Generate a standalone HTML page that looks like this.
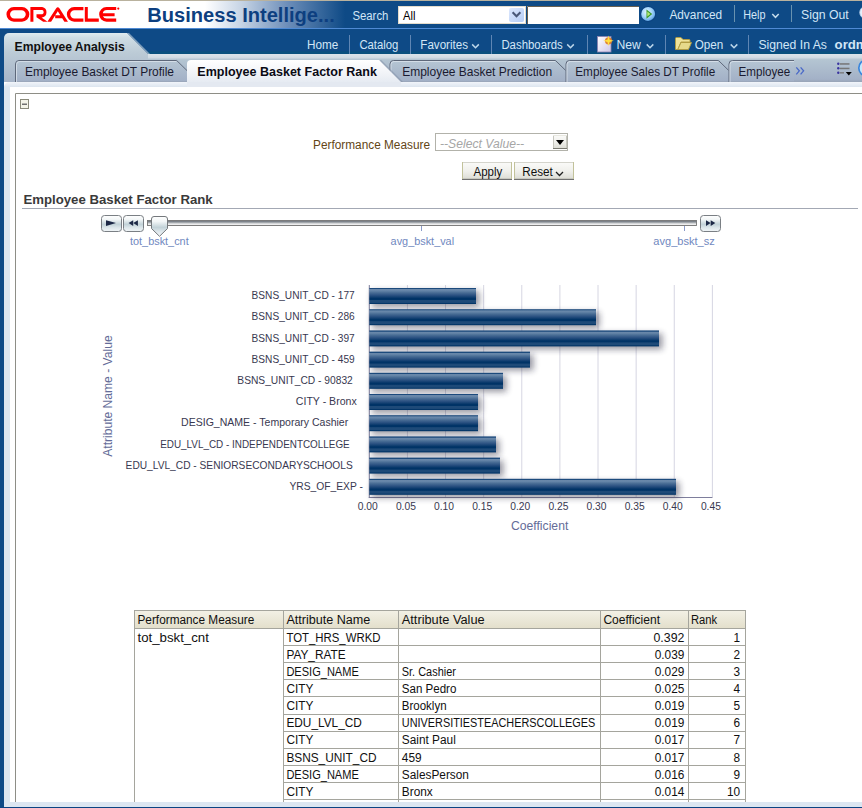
<!DOCTYPE html><html><head><meta charset="utf-8"><title>Employee Basket Factor Rank</title><style>html,body{margin:0;padding:0;background:#fff;overflow:hidden}svg{display:block;font-family:"Liberation Sans",sans-serif}</style></head><body>
<svg width="862" height="808" viewBox="0 0 862 808">
<defs>
<linearGradient id="hdr" gradientUnits="userSpaceOnUse" x1="205" y1="0" x2="345" y2="0"><stop offset="0" stop-color="#ffffff"/><stop offset="0.25" stop-color="#c9d6e6"/><stop offset="0.6" stop-color="#6a8cb8"/><stop offset="1" stop-color="#0e4a86"/></linearGradient>
<linearGradient id="eatab" gradientUnits="userSpaceOnUse" x1="0" y1="33" x2="0" y2="82"><stop offset="0" stop-color="#e0ebef"/><stop offset="0.1" stop-color="#cfdde4"/><stop offset="0.4" stop-color="#bccbd6"/><stop offset="1" stop-color="#a6b4c8"/></linearGradient>
<linearGradient id="tabbar" gradientUnits="userSpaceOnUse" x1="0" y1="54" x2="0" y2="82"><stop offset="0" stop-color="#dae3ea"/><stop offset="0.12" stop-color="#d2dce4"/><stop offset="0.2" stop-color="#b4c5d2"/><stop offset="0.9" stop-color="#a3b1c7"/><stop offset="1" stop-color="#98a4b6"/></linearGradient>
<linearGradient id="itab" gradientUnits="userSpaceOnUse" x1="0" y1="60" x2="0" y2="82"><stop offset="0" stop-color="#b6c6d4"/><stop offset="0.5" stop-color="#abbacc"/><stop offset="0.93" stop-color="#a3b1c7"/><stop offset="1" stop-color="#98a4b6"/></linearGradient>
<linearGradient id="atab" gradientUnits="userSpaceOnUse" x1="0" y1="60" x2="0" y2="87"><stop offset="0" stop-color="#ffffff"/><stop offset="0.6" stop-color="#eef1f6"/><stop offset="1" stop-color="#dfe6ef"/></linearGradient>
<linearGradient id="strip" gradientUnits="userSpaceOnUse" x1="0" y1="82" x2="0" y2="87"><stop offset="0" stop-color="#f2f5fa"/><stop offset="1" stop-color="#dce5ef"/></linearGradient>
<linearGradient id="btn" x1="0" y1="0" x2="0" y2="1"><stop offset="0" stop-color="#fbfbf9"/><stop offset="0.5" stop-color="#f0f0ec"/><stop offset="1" stop-color="#dadad2"/></linearGradient>
<linearGradient id="thdr" x1="0" y1="0" x2="0" y2="1"><stop offset="0" stop-color="#f3f1e6"/><stop offset="1" stop-color="#e3dfcb"/></linearGradient>
<linearGradient id="sbtn" x1="0" y1="0" x2="0" y2="1"><stop offset="0" stop-color="#ffffff"/><stop offset="0.25" stop-color="#f2f6f7"/><stop offset="0.55" stop-color="#c2d2d8"/><stop offset="0.75" stop-color="#dce6ea"/><stop offset="1" stop-color="#f2f6f8"/></linearGradient>
<linearGradient id="track" x1="0" y1="0" x2="0" y2="1"><stop offset="0" stop-color="#626a74"/><stop offset="0.3" stop-color="#8a9096"/><stop offset="0.62" stop-color="#d8dadc"/><stop offset="0.8" stop-color="#eeeeee"/><stop offset="1" stop-color="#b0b0b0"/></linearGradient>
<linearGradient id="bar" x1="0" y1="0" x2="0" y2="1"><stop offset="0" stop-color="#1c4a7c"/><stop offset="0.0625" stop-color="#1c4a7c"/><stop offset="0.09" stop-color="#6a88aa"/><stop offset="0.17" stop-color="#6585a8"/><stop offset="0.3" stop-color="#486c94"/><stop offset="0.45" stop-color="#2c5282"/><stop offset="0.58" stop-color="#103e70"/><stop offset="0.65" stop-color="#003366"/><stop offset="0.72" stop-color="#003366"/><stop offset="0.78" stop-color="#1e4a78"/><stop offset="0.9" stop-color="#1e4a78"/><stop offset="0.95" stop-color="#063869"/><stop offset="1" stop-color="#003366"/></linearGradient>
<filter id="shd" x="-10%" y="-60%" width="130%" height="240%"><feGaussianBlur stdDeviation="3"/></filter>
<radialGradient id="go" cx="0.4" cy="0.38" r="0.65"><stop offset="0" stop-color="#e4f4ff"/><stop offset="0.55" stop-color="#a6d6fa"/><stop offset="0.9" stop-color="#6eb0ea"/><stop offset="1" stop-color="#2a6cb0"/></radialGradient>
<linearGradient id="doc" x1="0" y1="0" x2="1" y2="1"><stop offset="0" stop-color="#ffffff"/><stop offset="1" stop-color="#cfc8e8"/></linearGradient>
<linearGradient id="fold" x1="0" y1="0" x2="0" y2="1"><stop offset="0" stop-color="#f8f0b0"/><stop offset="1" stop-color="#d8c870"/></linearGradient>
</defs>
<rect x="0" y="0" width="862" height="808" fill="#ffffff"/>
<rect x="0" y="0" width="862" height="1" fill="#b9b29e"/>
<rect x="0" y="1" width="862" height="27" fill="url(#hdr)"/>
<rect x="0" y="28" width="862" height="1" fill="#4f8ad4"/>
<rect x="0" y="29" width="862" height="26" fill="#0e4a86"/>
<rect x="148" y="51" width="714" height="3" fill="#0b4d80"/>
<rect x="148" y="52" width="714" height="2" fill="#09507e"/>
<rect x="0" y="29" width="4" height="779" fill="#0e4a86"/>
<rect x="0" y="807" width="862" height="1" fill="#0c4482"/>
<g fill="#ff0000">
<path fill-rule="evenodd" d="M13.8,7 H22 A7.3,7.3 0 0 1 22,21.7 H13.8 A7.3,7.3 0 0 1 13.8,7 Z M14.2,10.2 H21.6 A4.1,4.1 0 0 1 21.6,18.5 H14.2 A4.1,4.1 0 0 1 14.2,10.2 Z"/>
<path d="M30.4,7 H42.2 A5.3,5.3 0 0 1 42.2,17.4 H41.5 L47.6,21.7 H43.2 L36.5,17.2 V14.2 H42.3 A2.2,2.2 0 0 0 42.3,10.1 H33.4 V21.7 H30.4 Z"/>
<path d="M47.4,21.7 L56.2,8.2 Q57.8,6.2 59.4,8.2 L68,21.7 H64.4 L57.8,11.2 L51.1,21.7 Z M55.2,15.2 H62.2 L63.8,18.3 H55.2 Z"/>
<path d="M74.2,7 H83.4 V10.2 H74.4 A4.1,4.1 0 0 0 74.4,18.5 H83.4 V21.7 H74.2 A7.3,7.3 0 0 1 74.2,7 Z"/>
<path d="M84.8,7 H87.8 V18.6 H98.8 V21.7 H84.8 Z"/>
<path d="M106.5,7 H116.2 V10.1 H106.7 A4.1,4.1 0 0 0 102.8,13.3 H114.6 V16.2 H102.9 A4.1,4.1 0 0 0 106.7,18.6 H116.2 V21.7 H106.5 A7.3,7.3 0 0 1 106.5,7 Z"/>
<circle cx="118.3" cy="8.6" r="1.1"/>
</g>
<text x="147.30" y="22.00" font-size="20" font-weight="bold" fill="#0d3f80" textLength="187.42" lengthAdjust="spacingAndGlyphs">Business Intellige...</text>
<text x="352.40" y="19.50" font-size="12" fill="#d2e6f6" textLength="36.02" lengthAdjust="spacingAndGlyphs">Search</text>
<rect x="398" y="6" width="128" height="18" fill="#ffffff"/>
<rect x="398.5" y="6.5" width="127" height="17" fill="none" stroke="#e4dccb"/>
<defs><linearGradient id="dd" x1="0" y1="0" x2="1" y2="1"><stop offset="0" stop-color="#dde8fd"/><stop offset="1" stop-color="#b6cdf6"/></linearGradient></defs>
<rect x="509" y="8" width="15" height="14" rx="2" fill="url(#dd)"/>
<path d="M512.6,12.3 L516.5,16.2 L520.4,12.3" fill="none" stroke="#4a5878" stroke-width="2.1"/>
<text x="403.00" y="19.50" font-size="12" fill="#000000" textLength="12.43" lengthAdjust="spacingAndGlyphs">All</text>
<rect x="527" y="6" width="112" height="18" fill="#ffffff"/>
<path d="M527.5,24 V6.5 H639" fill="none" stroke="#6a6050" stroke-width="1"/>
<circle cx="648.2" cy="14" r="7.8" fill="#0a3a78" opacity="0.7"/>
<circle cx="648.2" cy="14" r="7" fill="url(#go)"/>
<path d="M646.5,9.4 L652.2,14 L646.5,18.7 Z" fill="#3c9a2a"/>
<path d="M647.3,11.4 L650.4,13.9 L647.3,16.4 Z" fill="#b4e878"/>
<text x="669.40" y="18.80" font-size="12" fill="#d2e6f6" textLength="52.67" lengthAdjust="spacingAndGlyphs">Advanced</text>
<rect x="734" y="5" width="1" height="17" fill="#6892b0"/>
<text x="743.20" y="18.80" font-size="12" fill="#d2e6f6" textLength="22.28" lengthAdjust="spacingAndGlyphs">Help</text>
<path d="M772.3,14 L775.5,17.3 L778.7,14" fill="none" stroke="#c4dcec" stroke-width="1.5"/>
<rect x="791" y="5" width="1" height="17" fill="#6892b0"/>
<text x="801.00" y="18.80" font-size="12" fill="#d2e6f6" textLength="47.69" lengthAdjust="spacingAndGlyphs">Sign Out</text>
<circle cx="866" cy="12.5" r="6.3" fill="#e6f0fa" stroke="#b0cce8" stroke-width="0.8"/>
<rect x="4" y="54" width="858" height="28" fill="url(#tabbar)"/>
<path d="M4,82 V38 A5,5 0 0 1 9,33 H127 L148,54 V82 Z" fill="url(#eatab)"/>
<path d="M127,33 L148,54 L150,54 L129,33 Z" fill="#c9d5de" opacity="0.6"/>
<text x="14.60" y="50.80" font-size="13" font-weight="bold" fill="#101010" textLength="110.11" lengthAdjust="spacingAndGlyphs">Employee Analysis</text>
<text x="307.00" y="49.20" font-size="12" fill="#d2e6f6" textLength="31.31" lengthAdjust="spacingAndGlyphs">Home</text>
<rect x="349" y="35" width="1" height="19" fill="#5f86b4"/>
<text x="359.40" y="49.20" font-size="12" fill="#d2e6f6" textLength="38.96" lengthAdjust="spacingAndGlyphs">Catalog</text>
<rect x="410" y="35" width="1" height="19" fill="#5f86b4"/>
<text x="420.30" y="49.20" font-size="12" fill="#d2e6f6" textLength="47.75" lengthAdjust="spacingAndGlyphs">Favorites</text>
<path d="M472.2,44.4 L475.5,47.7 L478.8,44.4" fill="none" stroke="#bcd6ea" stroke-width="1.5"/>
<rect x="491" y="35" width="1" height="19" fill="#5f86b4"/>
<text x="501.40" y="49.20" font-size="12" fill="#d2e6f6" textLength="61.40" lengthAdjust="spacingAndGlyphs">Dashboards</text>
<path d="M567.2,44.4 L570.5,47.7 L573.8,44.4" fill="none" stroke="#bcd6ea" stroke-width="1.5"/>
<rect x="587" y="35" width="1" height="19" fill="#5f86b4"/>
<rect x="597.5" y="36.5" width="13.5" height="15.5" fill="url(#doc)" stroke="#8c82b0" stroke-width="0.8"/>
<circle cx="608.5" cy="40.8" r="3.6" fill="#e07a20" opacity="0.9"/>
<path d="M608.5,35.5 L609.6,39.7 L613.8,40.8 L609.6,41.9 L608.5,46.1 L607.4,41.9 L603.2,40.8 L607.4,39.7 Z" fill="#ffe040"/>
<text x="616.40" y="49.20" font-size="12" fill="#d2e6f6" textLength="24.40" lengthAdjust="spacingAndGlyphs">New</text>
<path d="M646.7,44.4 L650,47.7 L653.3,44.4" fill="none" stroke="#bcd6ea" stroke-width="1.5"/>
<rect x="665" y="35" width="1" height="19" fill="#5f86b4"/>
<path d="M675.5,49.5 V38.5 Q675.5,37.5 676.5,37.5 H681 L683,39.5 H689 Q690,39.5 690,40.5 V42 H681 L677.8,49.5 Z" fill="#efe39a" stroke="#b39c3c" stroke-width="0.9"/>
<path d="M677.8,49.5 L681,42.5 H691.5 L688.5,49.5 Z" fill="#e6da8a" stroke="#b39c3c" stroke-width="0.9"/>
<text x="694.70" y="49.20" font-size="12" fill="#d2e6f6" textLength="28.56" lengthAdjust="spacingAndGlyphs">Open</text>
<path d="M730.7,44.4 L734,47.7 L737.3,44.4" fill="none" stroke="#bcd6ea" stroke-width="1.5"/>
<rect x="748" y="35" width="1" height="19" fill="#5f86b4"/>
<text x="758.40" y="49.20" font-size="12" fill="#d2e6f6" textLength="68.48" lengthAdjust="spacingAndGlyphs">Signed In As</text>
<text x="834.60" y="49.20" font-size="13" font-weight="bold" fill="#d2e6f6" textLength="33.00" lengthAdjust="spacingAndGlyphs">ordm</text>
<path d="M15,82 V64 A4,4 0 0 1 19,60 H176.7 L198.7,82 Z" fill="url(#itab)"/><path d="M15.5,82 V64 A3.5,3.5 0 0 1 19,60.5 H176.7 L198.7,82" fill="none" stroke="#5e687a" stroke-width="1"/><path d="M16.5,82 V64.5 A3,3 0 0 1 19.5,61.5 H176.2" fill="none" stroke="#dce4ec" stroke-width="1" opacity="0.8"/>
<path d="M389.5,82 V64 A4,4 0 0 1 393.5,60 H555.5 L577.5,82 Z" fill="url(#itab)"/><path d="M390.0,82 V64 A3.5,3.5 0 0 1 393.5,60.5 H555.5 L577.5,82" fill="none" stroke="#5e687a" stroke-width="1"/><path d="M391.0,82 V64.5 A3,3 0 0 1 394.0,61.5 H555.0" fill="none" stroke="#dce4ec" stroke-width="1" opacity="0.8"/>
<path d="M565.5,82 V64 A4,4 0 0 1 569.5,60 H718.5 L740.5,82 Z" fill="url(#itab)"/><path d="M566.0,82 V64 A3.5,3.5 0 0 1 569.5,60.5 H718.5 L740.5,82" fill="none" stroke="#5e687a" stroke-width="1"/><path d="M567.0,82 V64.5 A3,3 0 0 1 570.0,61.5 H718.0" fill="none" stroke="#dce4ec" stroke-width="1" opacity="0.8"/>
<path d="M728.5,82 V64 A4,4 0 0 1 732.5,60 H794 V82 Z" fill="url(#itab)"/>
<path d="M729,82 V64 A3.5,3.5 0 0 1 732.5,60.5 H794" fill="none" stroke="#5e687a"/>
<path d="M730,82 V64.5 A3,3 0 0 1 733,61.5 H794" fill="none" stroke="#dce4ec" opacity="0.8"/>
<path d="M380.2,60.5 L402.2,82.5" stroke="#8694aa" stroke-width="2.2" opacity="0.55"/>
<path d="M187,87 V64 A4,4 0 0 1 191,60 H379 L401,82 V87 Z" fill="url(#atab)"/>
<text x="25.00" y="75.90" font-size="13" fill="#1a1a30" textLength="149.02" lengthAdjust="spacingAndGlyphs">Employee Basket DT Profile</text>
<text x="197.30" y="76.40" font-size="13" font-weight="bold" fill="#0a0a14" textLength="179.61" lengthAdjust="spacingAndGlyphs">Employee Basket Factor Rank</text>
<text x="402.20" y="75.60" font-size="13" fill="#1a1a30" textLength="149.88" lengthAdjust="spacingAndGlyphs">Employee Basket Prediction</text>
<text x="575.30" y="75.90" font-size="13" fill="#1a1a30" textLength="139.90" lengthAdjust="spacingAndGlyphs">Employee Sales DT Profile</text>
<text x="738.50" y="75.90" font-size="13" fill="#1a1a30" textLength="51.71" lengthAdjust="spacingAndGlyphs">Employee</text>
<path d="M796.3,67.3 L799.3,70.8 L796.3,74.3 M800.6,67.3 L803.6,70.8 L800.6,74.3" fill="none" stroke="#4868c8" stroke-width="1.3"/>
<g fill="#3a34a0"><circle cx="838.3" cy="63.8" r="1.2"/><circle cx="838.3" cy="68.3" r="1.2"/><circle cx="838.3" cy="72.8" r="1.2"/></g>
<g fill="#767676"><rect x="840" y="63.2" width="9.5" height="1.5"/><rect x="840" y="67.7" width="9.5" height="1.5"/><rect x="840" y="72.2" width="4" height="1.3"/></g>
<path d="M845.8,72 H851.8 L848.8,75.5 Z" fill="#000000"/>
<circle cx="867" cy="68" r="8.2" fill="#c6e8fb" stroke="#3a86dc" stroke-width="1.7"/>
<path d="M4,802 V87 A5,5 0 0 1 9,82 H862 V802 Z" fill="url(#strip)"/>
<rect x="4" y="87" width="6" height="715" fill="#dce6f0"/>
<rect x="4" y="802" width="858" height="5" fill="#dce6f1"/>
<path d="M187,87 V82 H401 V87 Z" fill="#e4e9f1"/>
<rect x="10" y="87" width="852" height="715" fill="#ffffff"/>
<path d="M15.5,802 V93.5 H862" fill="none" stroke="#8e8e86" stroke-width="1"/>
<rect x="20.5" y="99.5" width="8" height="9" fill="#f4f4e8" stroke="#8a8a7a"/>
<rect x="22" y="103.5" width="5" height="1.5" fill="#707070"/>
<text x="313.00" y="148.80" font-size="12" fill="#634515" textLength="117.02" lengthAdjust="spacingAndGlyphs">Performance Measure</text>
<rect x="435.5" y="133.5" width="132" height="17" fill="#ffffff" stroke="#b2b2aa"/>
<rect x="553" y="135" width="14" height="14" fill="url(#btn)"/>
<rect x="553" y="135" width="1" height="14" fill="#c6c6be"/><rect x="566" y="135" width="1" height="14" fill="#c6c6be"/><rect x="553" y="135" width="14" height="1" fill="#e8e8e0"/><rect x="553" y="148" width="14" height="1" fill="#7a7a72"/>
<path d="M556,140 H564 L560,145 Z" fill="#000000"/>
<text x="440.00" y="147.50" font-size="12" font-style="italic" fill="#a6a6a6" textLength="84.02" lengthAdjust="spacingAndGlyphs">--Select Value--</text>
<rect x="462" y="162" width="50" height="18" fill="url(#btn)"/><rect x="462" y="162" width="50" height="1" fill="#d4d4cc"/><rect x="462" y="162" width="1" height="18" fill="#c2c29a"/><rect x="511" y="162" width="1" height="18" fill="#c2c29a"/><rect x="462" y="179" width="50" height="1" fill="#707070"/><rect x="463" y="178" width="48" height="1" fill="#c8c8c0"/>
<rect x="514" y="162" width="60" height="18" fill="url(#btn)"/><rect x="514" y="162" width="60" height="1" fill="#d4d4cc"/><rect x="514" y="162" width="1" height="18" fill="#c2c29a"/><rect x="573" y="162" width="1" height="18" fill="#c2c29a"/><rect x="514" y="179" width="60" height="1" fill="#707070"/><rect x="515" y="178" width="58" height="1" fill="#c8c8c0"/>
<text x="473.50" y="175.90" font-size="12" fill="#101010" textLength="28.72" lengthAdjust="spacingAndGlyphs">Apply</text>
<text x="522.20" y="175.90" font-size="12" fill="#101010" textLength="30.55" lengthAdjust="spacingAndGlyphs">Reset</text>
<path d="M556,172 L559.5,175.5 L563,172" fill="none" stroke="#202020" stroke-width="1.3"/>
<text x="23.40" y="204.10" font-size="13" font-weight="bold" fill="#3a3a3a" textLength="189.30" lengthAdjust="spacingAndGlyphs">Employee Basket Factor Rank</text>
<rect x="22" y="208" width="836" height="1" fill="#a3a8b4"/>
<rect x="101.5" y="215.5" width="20" height="16" rx="3" fill="url(#sbtn)" stroke="#7a7f84"/>
<path d="M106,220.2 L116,223.1 L106,226 Z" fill="#1c2846"/>
<rect x="123.5" y="215.5" width="20" height="16" rx="3" fill="url(#sbtn)" stroke="#7a7f84"/>
<path d="M128.6,223.1 L133.2,220.3 V225.9 Z M133.3,223.1 L137.9,220.3 V225.9 Z" fill="#1c2846"/>
<rect x="700.5" y="215.5" width="20" height="16" rx="3" fill="url(#sbtn)" stroke="#7a7f84"/>
<path d="M706,220.3 L710.6,223.1 L706,225.9 Z M710.7,220.3 L715.3,223.1 L710.7,225.9 Z" fill="#1c2846"/>
<rect x="147.5" y="220.5" width="549" height="5" fill="url(#track)" stroke="#767676" stroke-width="0.9"/>
<g fill="#8a9ac8"><rect x="421" y="226" width="1" height="5"/><rect x="684" y="226" width="1" height="5"/></g>
<path d="M151.5,219 Q151.5,216.5 154,216.5 H165 Q167.5,216.5 167.5,219 V228.5 L159.5,236.3 L151.5,228.5 Z" fill="url(#sbtn)" stroke="#74787c"/>
<text x="130.00" y="244.50" font-size="11" fill="#7088c0" textLength="58.71" lengthAdjust="spacingAndGlyphs">tot_bskt_cnt</text>
<text x="390.60" y="244.50" font-size="11" fill="#7088c0" textLength="63.50" lengthAdjust="spacingAndGlyphs">avg_bskt_val</text>
<text x="653.30" y="244.60" font-size="11" fill="#7088c0" textLength="61.54" lengthAdjust="spacingAndGlyphs">avg_bskt_sz</text>
<rect x="406.92" y="285" width="1" height="212" fill="#d6d6e2"/>
<rect x="445.04" y="285" width="1" height="212" fill="#d6d6e2"/>
<rect x="483.16" y="285" width="1" height="212" fill="#d6d6e2"/>
<rect x="521.28" y="285" width="1" height="212" fill="#d6d6e2"/>
<rect x="559.40" y="285" width="1" height="212" fill="#d6d6e2"/>
<rect x="597.52" y="285" width="1" height="212" fill="#d6d6e2"/>
<rect x="635.64" y="285" width="1" height="212" fill="#d6d6e2"/>
<rect x="673.76" y="285" width="1" height="212" fill="#d6d6e2"/>
<rect x="711.88" y="285" width="1" height="212" fill="#d6d6e2"/>
<rect x="368.8" y="497" width="343.7" height="1" fill="#7e7e9c"/>
<rect x="368.8" y="285" width="1" height="213" fill="#7e7e9c"/>
<rect x="371.80" y="291.00" width="107.70" height="16" fill="#1a1a30" opacity="0.45" filter="url(#shd)"/>
<rect x="371.80" y="312.20" width="227.70" height="16" fill="#1a1a30" opacity="0.45" filter="url(#shd)"/>
<rect x="371.80" y="333.40" width="290.70" height="16" fill="#1a1a30" opacity="0.45" filter="url(#shd)"/>
<rect x="371.80" y="354.60" width="161.70" height="16" fill="#1a1a30" opacity="0.45" filter="url(#shd)"/>
<rect x="371.80" y="375.80" width="134.70" height="16" fill="#1a1a30" opacity="0.45" filter="url(#shd)"/>
<rect x="371.80" y="397.00" width="109.70" height="16" fill="#1a1a30" opacity="0.45" filter="url(#shd)"/>
<rect x="371.80" y="418.20" width="109.70" height="16" fill="#1a1a30" opacity="0.45" filter="url(#shd)"/>
<rect x="371.80" y="439.40" width="127.70" height="16" fill="#1a1a30" opacity="0.45" filter="url(#shd)"/>
<rect x="371.80" y="460.60" width="131.70" height="16" fill="#1a1a30" opacity="0.45" filter="url(#shd)"/>
<rect x="371.80" y="481.80" width="307.70" height="16" fill="#1a1a30" opacity="0.45" filter="url(#shd)"/>
<rect x="369.30" y="288.00" width="106.70" height="16" fill="url(#bar)"/>
<rect x="369.30" y="309.20" width="226.70" height="16" fill="url(#bar)"/>
<rect x="369.30" y="330.40" width="289.70" height="16" fill="url(#bar)"/>
<rect x="369.30" y="351.60" width="160.70" height="16" fill="url(#bar)"/>
<rect x="369.30" y="372.80" width="133.70" height="16" fill="url(#bar)"/>
<rect x="369.30" y="394.00" width="108.70" height="16" fill="url(#bar)"/>
<rect x="369.30" y="415.20" width="108.70" height="16" fill="url(#bar)"/>
<rect x="369.30" y="436.40" width="126.70" height="16" fill="url(#bar)"/>
<rect x="369.30" y="457.60" width="130.70" height="16" fill="url(#bar)"/>
<rect x="369.30" y="478.80" width="306.70" height="16" fill="url(#bar)"/>
<text x="251.60" y="299.20" font-size="11" fill="#383850" textLength="103.07" lengthAdjust="spacingAndGlyphs">BSNS_UNIT_CD - 177</text>
<text x="251.60" y="320.40" font-size="11" fill="#383850" textLength="103.07" lengthAdjust="spacingAndGlyphs">BSNS_UNIT_CD - 286</text>
<text x="251.60" y="341.60" font-size="11" fill="#383850" textLength="103.07" lengthAdjust="spacingAndGlyphs">BSNS_UNIT_CD - 397</text>
<text x="251.60" y="362.80" font-size="11" fill="#383850" textLength="103.07" lengthAdjust="spacingAndGlyphs">BSNS_UNIT_CD - 459</text>
<text x="237.30" y="384.00" font-size="11" fill="#383850" textLength="115.50" lengthAdjust="spacingAndGlyphs">BSNS_UNIT_CD - 90832</text>
<text x="295.80" y="405.20" font-size="11" fill="#383850" textLength="60.97" lengthAdjust="spacingAndGlyphs">CITY - Bronx</text>
<text x="181.10" y="426.40" font-size="11" fill="#383850" textLength="167.12" lengthAdjust="spacingAndGlyphs">DESIG_NAME - Temporary Cashier</text>
<text x="160.20" y="447.60" font-size="11" fill="#383850" textLength="189.49" lengthAdjust="spacingAndGlyphs">EDU_LVL_CD - INDEPENDENTCOLLEGE</text>
<text x="125.60" y="468.80" font-size="11" fill="#383850" textLength="227.13" lengthAdjust="spacingAndGlyphs">EDU_LVL_CD - SENIORSECONDARYSCHOOLS</text>
<text x="289.40" y="490.00" font-size="11" fill="#383850" textLength="73.56" lengthAdjust="spacingAndGlyphs">YRS_OF_EXP -</text>
<text x="357.80" y="509.80" font-size="11" fill="#383850" textLength="20.01" lengthAdjust="spacingAndGlyphs">0.00</text>
<text x="395.92" y="509.80" font-size="11" fill="#383850" textLength="20.01" lengthAdjust="spacingAndGlyphs">0.05</text>
<text x="434.04" y="509.80" font-size="11" fill="#383850" textLength="20.01" lengthAdjust="spacingAndGlyphs">0.10</text>
<text x="472.16" y="509.80" font-size="11" fill="#383850" textLength="20.01" lengthAdjust="spacingAndGlyphs">0.15</text>
<text x="510.28" y="509.80" font-size="11" fill="#383850" textLength="20.01" lengthAdjust="spacingAndGlyphs">0.20</text>
<text x="548.40" y="509.80" font-size="11" fill="#383850" textLength="20.01" lengthAdjust="spacingAndGlyphs">0.25</text>
<text x="586.52" y="509.80" font-size="11" fill="#383850" textLength="20.01" lengthAdjust="spacingAndGlyphs">0.30</text>
<text x="624.64" y="509.80" font-size="11" fill="#383850" textLength="20.01" lengthAdjust="spacingAndGlyphs">0.35</text>
<text x="662.76" y="509.80" font-size="11" fill="#383850" textLength="20.01" lengthAdjust="spacingAndGlyphs">0.40</text>
<text x="700.88" y="509.80" font-size="11" fill="#383850" textLength="20.01" lengthAdjust="spacingAndGlyphs">0.45</text>
<text x="511.00" y="530.30" font-size="12" fill="#646c98" textLength="57.28" lengthAdjust="spacingAndGlyphs">Coefficient</text>
<text x="-456.80" y="112.30" font-size="12" fill="#646c98" textLength="121.40" lengthAdjust="spacingAndGlyphs" transform="rotate(-90)">Attribute Name - Value</text>
<rect x="134" y="610" width="611" height="18" fill="url(#thdr)"/>
<rect x="134" y="610" width="612" height="1" fill="#a5a59d"/>
<rect x="134" y="610" width="1" height="192" fill="#a5a59d"/>
<rect x="283" y="610" width="1" height="192" fill="#a5a59d"/>
<rect x="398" y="610" width="1" height="192" fill="#a5a59d"/>
<rect x="600" y="610" width="1" height="192" fill="#a5a59d"/>
<rect x="688" y="610" width="1" height="192" fill="#a5a59d"/>
<rect x="745" y="610" width="1" height="192" fill="#a5a59d"/>
<rect x="134" y="628" width="612" height="1" fill="#a5a59d"/>
<rect x="283" y="645" width="463" height="1" fill="#a5a59d"/>
<rect x="283" y="662" width="463" height="1" fill="#a5a59d"/>
<rect x="283" y="679" width="463" height="1" fill="#a5a59d"/>
<rect x="283" y="696" width="463" height="1" fill="#a5a59d"/>
<rect x="283" y="714" width="463" height="1" fill="#a5a59d"/>
<rect x="283" y="731" width="463" height="1" fill="#a5a59d"/>
<rect x="283" y="748" width="463" height="1" fill="#a5a59d"/>
<rect x="283" y="765" width="463" height="1" fill="#a5a59d"/>
<rect x="283" y="782" width="463" height="1" fill="#a5a59d"/>
<rect x="283" y="799" width="463" height="1" fill="#a5a59d"/>
<text x="137.50" y="623.70" font-size="12" fill="#101010" textLength="116.72" lengthAdjust="spacingAndGlyphs">Performance Measure</text>
<text x="286.40" y="623.70" font-size="12" fill="#101010" textLength="83.94" lengthAdjust="spacingAndGlyphs">Attribute Name</text>
<text x="401.80" y="623.70" font-size="12" fill="#101010" textLength="82.83" lengthAdjust="spacingAndGlyphs">Attribute Value</text>
<text x="603.40" y="623.70" font-size="12" fill="#101010" textLength="56.58" lengthAdjust="spacingAndGlyphs">Coefficient</text>
<text x="691.00" y="623.70" font-size="12" fill="#101010" textLength="26.12" lengthAdjust="spacingAndGlyphs">Rank</text>
<text x="137.50" y="641.50" font-size="12" fill="#101010" textLength="71.41" lengthAdjust="spacingAndGlyphs">tot_bskt_cnt</text>
<text x="286.40" y="641.80" font-size="12" fill="#101010" textLength="94.12" lengthAdjust="spacingAndGlyphs">TOT_HRS_WRKD</text>
<text x="653.50" y="641.80" font-size="12" fill="#101010" textLength="30.83" lengthAdjust="spacingAndGlyphs">0.392</text>
<text x="733.39" y="641.80" font-size="12" fill="#101010" textLength="6.58" lengthAdjust="spacingAndGlyphs">1</text>
<text x="286.40" y="658.90" font-size="12" fill="#101010" textLength="59.22" lengthAdjust="spacingAndGlyphs">PAY_RATE</text>
<text x="654.71" y="658.90" font-size="12" fill="#101010" textLength="29.62" lengthAdjust="spacingAndGlyphs">0.039</text>
<text x="733.39" y="658.90" font-size="12" fill="#101010" textLength="6.58" lengthAdjust="spacingAndGlyphs">2</text>
<text x="286.40" y="676.00" font-size="12" fill="#101010" textLength="72.39" lengthAdjust="spacingAndGlyphs">DESIG_NAME</text>
<text x="401.80" y="676.00" font-size="12" fill="#101010" textLength="54.06" lengthAdjust="spacingAndGlyphs">Sr. Cashier</text>
<text x="654.71" y="676.00" font-size="12" fill="#101010" textLength="29.62" lengthAdjust="spacingAndGlyphs">0.029</text>
<text x="733.39" y="676.00" font-size="12" fill="#101010" textLength="6.58" lengthAdjust="spacingAndGlyphs">3</text>
<text x="286.40" y="693.10" font-size="12" fill="#101010" textLength="26.96" lengthAdjust="spacingAndGlyphs">CITY</text>
<text x="401.80" y="693.10" font-size="12" fill="#101010" textLength="54.61" lengthAdjust="spacingAndGlyphs">San Pedro</text>
<text x="654.71" y="693.10" font-size="12" fill="#101010" textLength="29.62" lengthAdjust="spacingAndGlyphs">0.025</text>
<text x="733.39" y="693.10" font-size="12" fill="#101010" textLength="6.58" lengthAdjust="spacingAndGlyphs">4</text>
<text x="286.40" y="710.20" font-size="12" fill="#101010" textLength="26.96" lengthAdjust="spacingAndGlyphs">CITY</text>
<text x="401.80" y="710.20" font-size="12" fill="#101010" textLength="44.79" lengthAdjust="spacingAndGlyphs">Brooklyn</text>
<text x="654.71" y="710.20" font-size="12" fill="#101010" textLength="29.62" lengthAdjust="spacingAndGlyphs">0.019</text>
<text x="733.39" y="710.20" font-size="12" fill="#101010" textLength="6.58" lengthAdjust="spacingAndGlyphs">5</text>
<text x="286.40" y="727.30" font-size="12" fill="#101010" textLength="75.44" lengthAdjust="spacingAndGlyphs">EDU_LVL_CD</text>
<text x="401.80" y="727.30" font-size="12" fill="#101010" textLength="193.39" lengthAdjust="spacingAndGlyphs">UNIVERSITIESTEACHERSCOLLEGES</text>
<text x="654.71" y="727.30" font-size="12" fill="#101010" textLength="29.62" lengthAdjust="spacingAndGlyphs">0.019</text>
<text x="733.39" y="727.30" font-size="12" fill="#101010" textLength="6.58" lengthAdjust="spacingAndGlyphs">6</text>
<text x="286.40" y="744.40" font-size="12" fill="#101010" textLength="26.96" lengthAdjust="spacingAndGlyphs">CITY</text>
<text x="401.80" y="744.40" font-size="12" fill="#101010" textLength="53.96" lengthAdjust="spacingAndGlyphs">Saint Paul</text>
<text x="654.71" y="744.40" font-size="12" fill="#101010" textLength="29.62" lengthAdjust="spacingAndGlyphs">0.017</text>
<text x="733.39" y="744.40" font-size="12" fill="#101010" textLength="6.58" lengthAdjust="spacingAndGlyphs">7</text>
<text x="286.40" y="761.50" font-size="12" fill="#101010" textLength="90.11" lengthAdjust="spacingAndGlyphs">BSNS_UNIT_CD</text>
<text x="401.80" y="761.50" font-size="12" fill="#101010" textLength="19.75" lengthAdjust="spacingAndGlyphs">459</text>
<text x="654.71" y="761.50" font-size="12" fill="#101010" textLength="29.62" lengthAdjust="spacingAndGlyphs">0.017</text>
<text x="733.39" y="761.50" font-size="12" fill="#101010" textLength="6.58" lengthAdjust="spacingAndGlyphs">8</text>
<text x="286.40" y="778.60" font-size="12" fill="#101010" textLength="72.39" lengthAdjust="spacingAndGlyphs">DESIG_NAME</text>
<text x="401.80" y="778.60" font-size="12" fill="#101010" textLength="67.12" lengthAdjust="spacingAndGlyphs">SalesPerson</text>
<text x="654.71" y="778.60" font-size="12" fill="#101010" textLength="29.62" lengthAdjust="spacingAndGlyphs">0.016</text>
<text x="733.39" y="778.60" font-size="12" fill="#101010" textLength="6.58" lengthAdjust="spacingAndGlyphs">9</text>
<text x="286.40" y="795.70" font-size="12" fill="#101010" textLength="26.96" lengthAdjust="spacingAndGlyphs">CITY</text>
<text x="401.80" y="795.70" font-size="12" fill="#101010" textLength="30.92" lengthAdjust="spacingAndGlyphs">Bronx</text>
<text x="654.71" y="795.70" font-size="12" fill="#101010" textLength="29.62" lengthAdjust="spacingAndGlyphs">0.014</text>
<text x="726.88" y="795.70" font-size="12" fill="#101010" textLength="13.17" lengthAdjust="spacingAndGlyphs">10</text>
</svg></body></html>
